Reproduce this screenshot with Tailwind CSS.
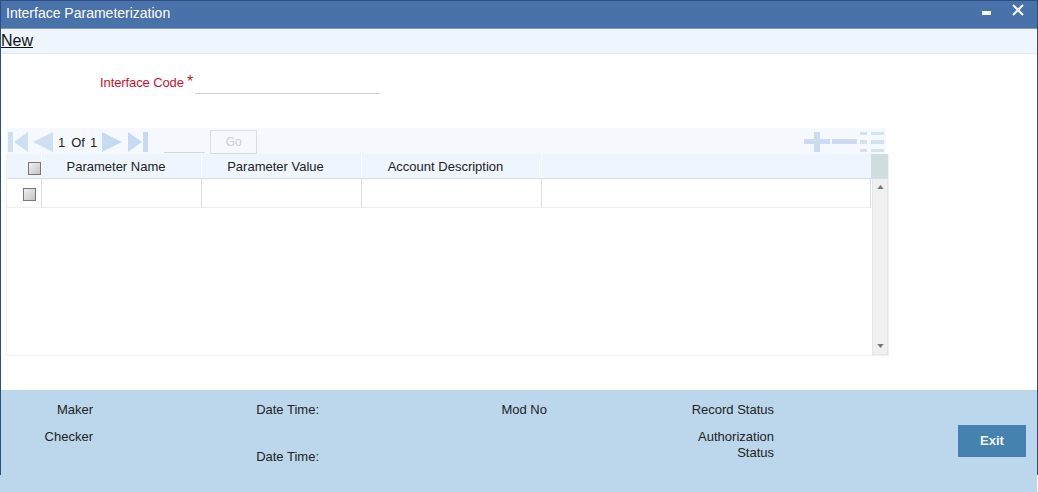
<!DOCTYPE html>
<html>
<head>
<meta charset="utf-8">
<script src="https://cdn.jsdelivr.net/npm/@tailwindcss/browser@4"></script>
</head>
<body class="bg-white">
<div class="relative flex flex-col w-[1038px] h-[492px] overflow-hidden font-['Liberation_Sans',Arial,sans-serif] text-[13px] text-[#222]">
  <div class="absolute z-10 left-0 top-0 w-px h-[475px] bg-[#2c4f82]"></div>
  <div class="absolute z-10 right-0 top-0 w-px h-[475px] bg-[#2c4f82]"></div>
  <header class="flex justify-between h-[29px] shrink-0 bg-[#4872a9] border-t border-t-[#2c4f82] border-b border-b-[#7f9bb8] text-white pl-[6px]">
    <span class="text-[14px] leading-[25px]">Interface Parameterization</span>
    <div class="flex pr-[14px] pt-[3px] gap-[20px]">
      <svg class="w-[10px] h-[10px] mt-[7px]" viewBox="0 0 10 10"><rect x="0" y="0" width="9" height="4" fill="#fff"/></svg>
      <svg class="w-[12px] h-[12px]" viewBox="0 0 12 12"><path d="M1 1 L11 11 M11 1 L1 11" stroke="#fff" stroke-width="2" fill="none"/></svg>
    </div>
  </header>
  <div class="h-[25px] shrink-0 bg-[#eef5fd] border-b border-[#e6e9ee] pl-[1px]">
    <a class="text-[16px] leading-[23px] text-[#111] underline">New</a>
  </div>
  <div class="flex items-start h-[74px] shrink-0 pl-[100px]">
    <span class="text-[13px] leading-[14px] mt-[22px] text-[#c8102e] w-[86px] whitespace-nowrap tracking-[-0.1px]">Interface Code</span>
    <span class="text-[16px] leading-[14px] mt-[21px] ml-[1px] text-[#c8102e] w-[8px]">*</span>
    <div class="w-[185px] h-[40px] border-b border-[#cfcfcf]"></div>
  </div>
  <section class="w-[883px] h-[228px] ml-[6px] shrink-0 flex flex-col">
    <div class="flex items-center h-[26px] w-[880px] shrink-0 bg-[#f5f9fe] pl-[2px] pt-[2px]">
      <svg class="w-[20px] h-[24px]" viewBox="0 0 20 24"><path d="M0 2h5v20H0z M20 2v20L6 12z" fill="#cfdff2"/></svg>
      <svg class="w-[20px] h-[24px] ml-[5px]" viewBox="0 0 20 24"><path d="M20 2v20L0 12z" fill="#cfdff2"/></svg>
      <span class="ml-[5px] mt-[2px] text-[13px] text-[#222]">1</span>
      <span class="ml-[6px] mt-[2px] text-[13px] text-[#222]">Of</span>
      <span class="ml-[5px] mt-[2px] text-[13px] text-[#222]">1</span>
      <svg class="w-[20px] h-[24px] ml-[5px]" viewBox="0 0 20 24"><path d="M0 2v20l20-10z" fill="#c6daf2"/></svg>
      <svg class="w-[20px] h-[24px] ml-[6px]" viewBox="0 0 20 24"><path d="M0 2v20l14-10z M15 2h5v20h-5z" fill="#c6daf2"/></svg>
      <div class="w-[41px] h-[15px] ml-[16px] mt-[7px] border-b border-[#d5d9de]"></div>
      <button class="w-[47px] h-[24px] ml-[5px] bg-[#f5f8fc] border border-[#d8dde3] text-[12px] text-[#c9ced4]">Go</button>
      <div class="ml-auto flex items-center gap-[2px] mr-[1px]">
        <svg class="w-[26px] h-[20px]" viewBox="0 0 26 20"><path d="M10 0h6v7h10v5H16v8h-6v-8H0V7h10z" fill="#cbdcf1"/></svg>
        <svg class="w-[25px] h-[20px] mr-[1px]" viewBox="0 0 25 20"><rect y="7" width="25" height="5" fill="#cbdcf1"/></svg>
        <svg class="w-[25px] h-[20px]" viewBox="0 0 25 20"><path d="M0 0h7v3H0z M11 0h13v3H11z M0 8h7v4H0z M11 8h13v4H11z M0 17h7v3H0z M11 17h13v3H11z" fill="#d3e1f3"/></svg>
      </div>
    </div>
    <div class="flex flex-col grow border border-t-0 border-[#f0f0f0] relative">
      <div class="flex h-[25px] shrink-0 bg-[#eef5fd] border-b border-[#d5dded]">
        <div class="w-[35px] border-r border-white flex items-center pl-[21px] shrink-0">
          <span class="block w-[13px] h-[13px] shrink-0 border border-[#777] bg-linear-to-br from-[#f0f0f0] to-[#c4c4c4] mt-[4px]"></span>
        </div>
        <div class="w-[160px] border-r border-white text-center pt-[5px] pr-[11px] text-[13px] leading-[16px] text-[#222]">Parameter Name</div>
        <div class="w-[160px] border-r border-white text-center pt-[5px] pr-[12px] text-[13px] leading-[16px] text-[#222]">Parameter Value</div>
        <div class="w-[180px] border-r border-white text-center pt-[5px] pr-[12px] text-[13px] leading-[16px] text-[#222]">Account Description</div>
        <div class="grow"></div>
        <div class="w-[17px] bg-[#cfdde0]"></div>
      </div>
      <div class="flex grow">
        <div class="grow flex flex-col">
          <div class="flex h-[29px] border-b border-[#eeeeee] border-r border-r-[#d5dded]">
            <div class="w-[35px] border-r border-[#d5dded] flex items-center pl-[16px] pt-[2px] shrink-0">
              <span class="block w-[13px] h-[13px] shrink-0 border border-[#777] bg-linear-to-br from-[#f0f0f0] to-[#c4c4c4]"></span>
            </div>
            <div class="w-[160px] border-r border-[#d5dded]"></div>
            <div class="w-[160px] border-r border-[#d5dded]"></div>
            <div class="w-[180px] border-r border-[#d5dded]"></div>
          </div>
        </div>
        <div class="w-[16px] ml-px shrink-0 bg-[#f0f0f0] border border-t-0 border-[#e6e6e6] flex flex-col items-center justify-between py-[6px]">
          <svg class="w-[7px] h-[4px]" viewBox="0 0 8 5"><path d="M4 0l4 5H0z" fill="#777"/></svg>
          <svg class="w-[7px] h-[4px]" viewBox="0 0 8 5"><path d="M0 0h8L4 5z" fill="#777"/></svg>
        </div>
      </div>
    </div>
  </section>
  <div class="h-[34px] shrink-0"></div>
  <footer class="relative grid grid-cols-[93px_226px_228px_227px_1fr] w-[1037px] h-[102px] shrink-0 bg-[#bcd7ec] text-[13px] text-[#222] pt-[13px]">
    <div class="flex flex-col items-end gap-[13px] leading-[14px]"><span>Maker</span><span>Checker</span></div>
    <div class="flex flex-col items-end gap-[33px] leading-[14px]"><span>Date Time:</span><span>Date Time:</span></div>
    <div class="flex flex-col items-end leading-[14px]"><span>Mod No</span></div>
    <div class="flex flex-col items-end gap-[13px] leading-[14px] text-right"><span>Record Status</span><span class="leading-[16px] -mt-[1px]">Authorization<br>Status</span></div>
    <div class="flex justify-end pr-[11px]">
      <button class="w-[68px] h-[32px] mt-[22px] bg-[#4682b0] text-[#eef6fb] text-[13px] font-bold">Exit</button>
    </div>
  </footer>
</div>
</body>
</html>
